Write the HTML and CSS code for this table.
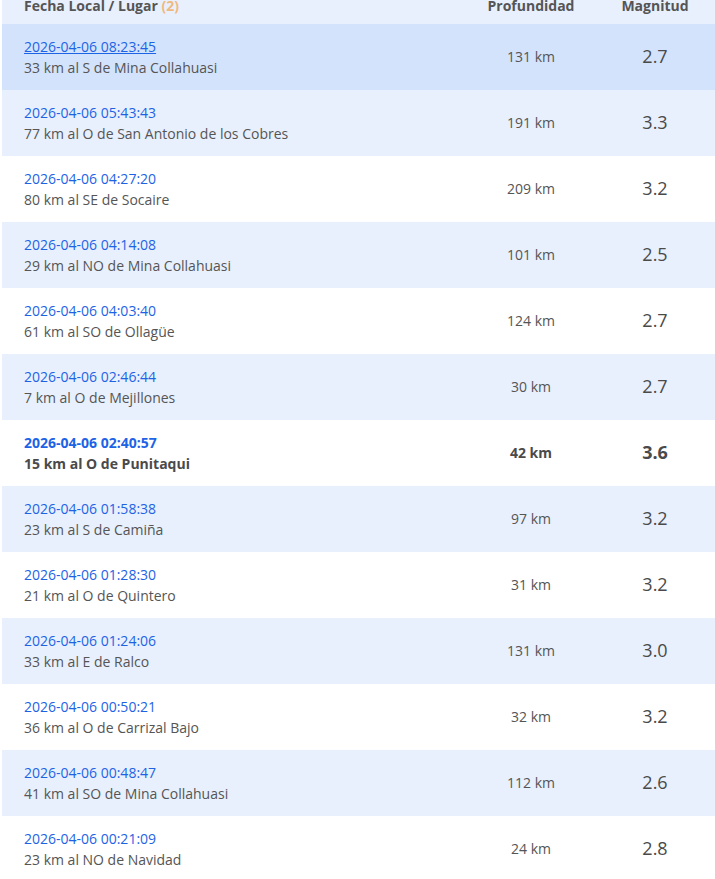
FILE: index.html
```html
<!DOCTYPE html>
<html lang="es">
<head>
<meta charset="utf-8">
<link rel="stylesheet" href="styles.css">
</head>
<body>
<div class="table">
  <div class="row head">
    <div class="c1">Fecha Local / Lugar <span class="count">(2)</span></div>
    <div class="c2">Profundidad</div>
    <div class="c3">Magnitud</div>
  </div>
  <div class="row sel">
    <div class="c1"><a class="date u">2026-04-06 08:23:45</a><div class="place">33 km al S de Mina Collahuasi</div></div>
    <div class="c2">131 km</div><div class="c3">2.7</div>
  </div>
  <div class="row alt">
    <div class="c1"><a class="date">2026-04-06 05:43:43</a><div class="place">77 km al O de San Antonio de los Cobres</div></div>
    <div class="c2">191 km</div><div class="c3">3.3</div>
  </div>
  <div class="row">
    <div class="c1"><a class="date">2026-04-06 04:27:20</a><div class="place">80 km al SE de Socaire</div></div>
    <div class="c2">209 km</div><div class="c3">3.2</div>
  </div>
  <div class="row alt">
    <div class="c1"><a class="date">2026-04-06 04:14:08</a><div class="place">29 km al NO de Mina Collahuasi</div></div>
    <div class="c2">101 km</div><div class="c3">2.5</div>
  </div>
  <div class="row">
    <div class="c1"><a class="date">2026-04-06 04:03:40</a><div class="place">61 km al SO de Ollagüe</div></div>
    <div class="c2">124 km</div><div class="c3">2.7</div>
  </div>
  <div class="row alt">
    <div class="c1"><a class="date">2026-04-06 02:46:44</a><div class="place">7 km al O de Mejillones</div></div>
    <div class="c2">30 km</div><div class="c3">2.7</div>
  </div>
  <div class="row strong">
    <div class="c1"><a class="date">2026-04-06 02:40:57</a><div class="place">15 km al O de Punitaqui</div></div>
    <div class="c2">42 km</div><div class="c3">3.6</div>
  </div>
  <div class="row alt">
    <div class="c1"><a class="date">2026-04-06 01:58:38</a><div class="place">23 km al S de Camiña</div></div>
    <div class="c2">97 km</div><div class="c3">3.2</div>
  </div>
  <div class="row">
    <div class="c1"><a class="date">2026-04-06 01:28:30</a><div class="place">21 km al O de Quintero</div></div>
    <div class="c2">31 km</div><div class="c3">3.2</div>
  </div>
  <div class="row alt">
    <div class="c1"><a class="date">2026-04-06 01:24:06</a><div class="place">33 km al E de Ralco</div></div>
    <div class="c2">131 km</div><div class="c3">3.0</div>
  </div>
  <div class="row">
    <div class="c1"><a class="date">2026-04-06 00:50:21</a><div class="place">36 km al O de Carrizal Bajo</div></div>
    <div class="c2">32 km</div><div class="c3">3.2</div>
  </div>
  <div class="row alt">
    <div class="c1"><a class="date">2026-04-06 00:48:47</a><div class="place">41 km al SO de Mina Collahuasi</div></div>
    <div class="c2">112 km</div><div class="c3">2.6</div>
  </div>
  <div class="row">
    <div class="c1"><a class="date">2026-04-06 00:21:09</a><div class="place">23 km al NO de Navidad</div></div>
    <div class="c2">24 km</div><div class="c3">2.8</div>
  </div>
</div>
</body>
</html>
```
FILE: styles.css
```css
html, body {
  margin: 0;
  padding: 0;
  background: #ffffff;
  overflow: hidden;
}
body {
  font-family: "Open Sans", "Liberation Sans", sans-serif;
  font-size: 14px;
  color: #555555;
}
.table {
  margin-left: 2px;
  width: 713px;
}
.row {
  display: grid;
  grid-template-columns: 1fr 128px 120px;
  align-items: center;
  height: 66px;
  background: #ffffff;
}
.row.alt { background: #e8f0fd; }
.row.sel { background: #d3e3fc; }
.c1 {
  padding-left: 22px;
  line-height: 21px;
}
.c2 {
  text-align: center;
  padding-bottom: 2px;
}
.c3 {
  text-align: center;
  font-size: 18px;
  color: #4a4a4a;
  padding-bottom: 2px;
}
.row.head {
  height: 24px;
  align-items: start;
  background: #e8f0fd;
  font-weight: 700;
  color: #555555;
}
.head .c1,
.head .c2,
.head .c3 {
  line-height: 12px;
  font-size: 14px;
  color: #555555;
  padding-bottom: 0;
}
.count { color: #f0b97e; }
.date {
  display: block;
  color: #1d63e6;
  text-decoration: none;
}
.date.u { text-decoration: underline; }
.place { color: #555555; }
.strong { font-weight: 700; }
.strong .place, .strong .c2, .strong .c3 { color: #4a4a4a; }
```
